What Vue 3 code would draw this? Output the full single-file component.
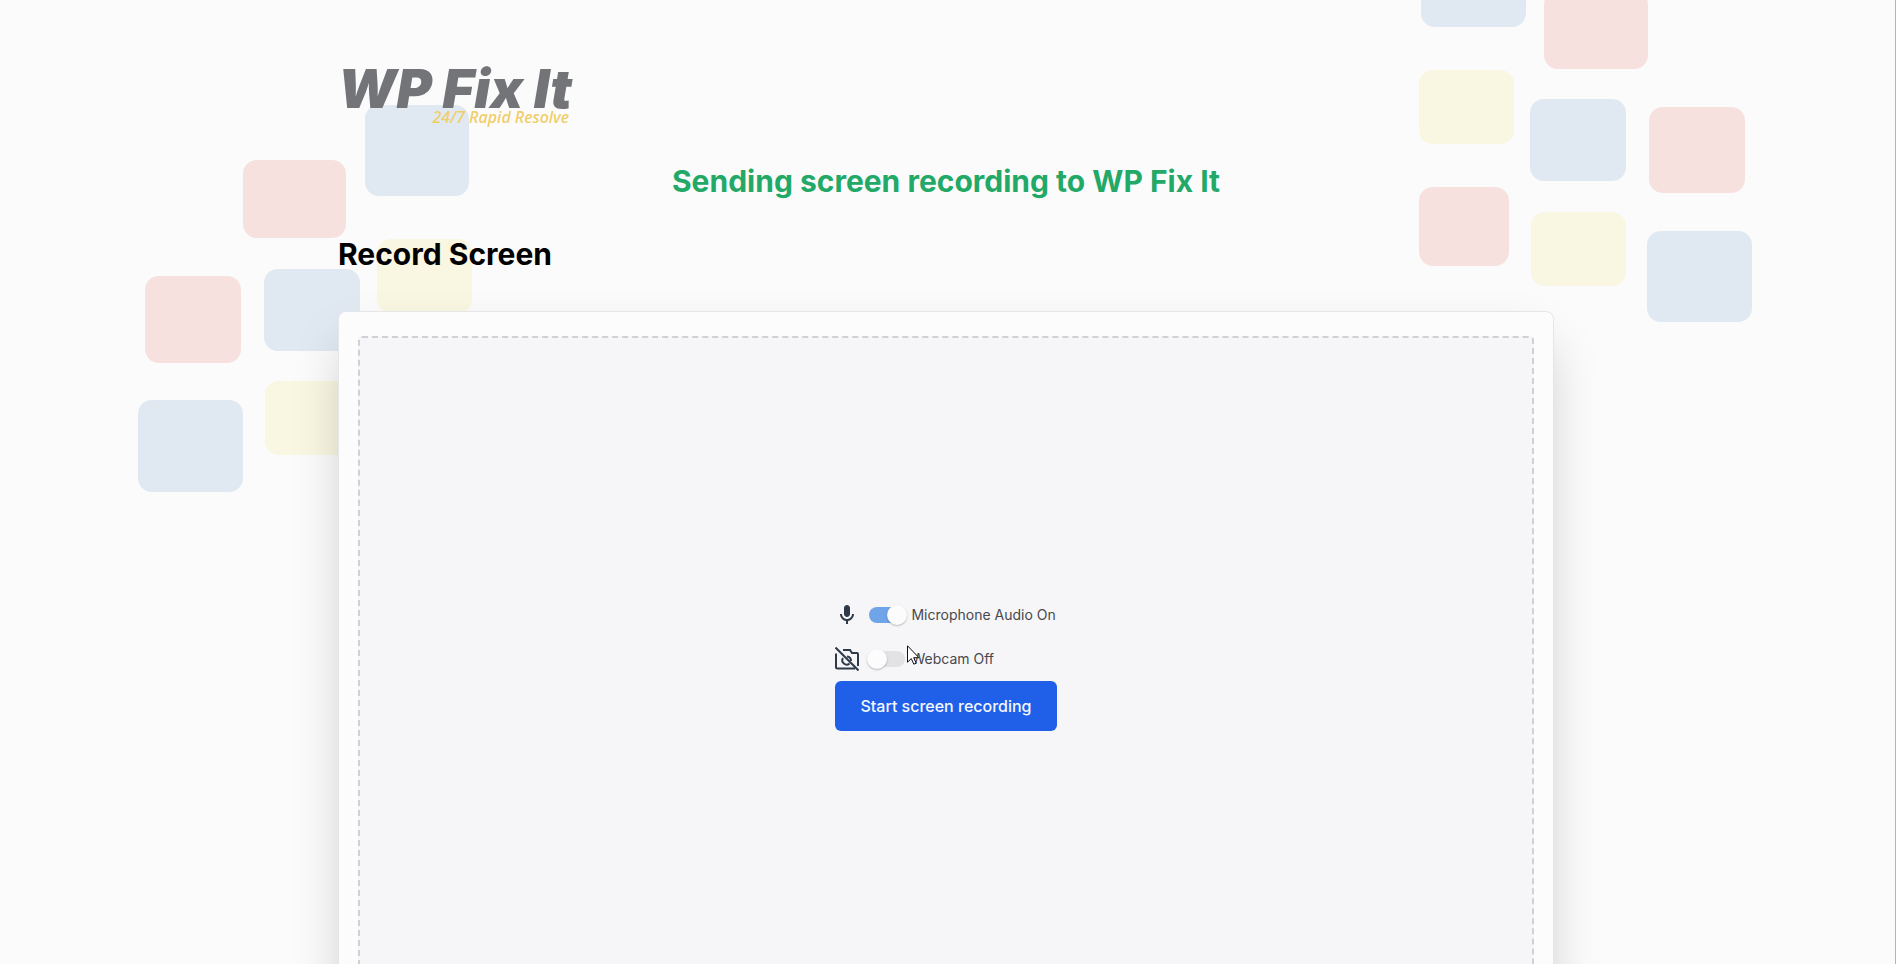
<script setup>
import { ref } from 'vue'

const micOn = ref(true)
const webcamOn = ref(false)

const leftTiles = [
  { x: 243, y: 160, w: 103, h: 78, tone: 'red' },
  { x: 365, y: 105, w: 104, h: 91, tone: 'blue' },
  { x: 145, y: 276, w: 96, h: 87, tone: 'red' },
  { x: 264, y: 269, w: 96, h: 82, tone: 'blue' },
  { x: 377, y: 239, w: 95, h: 74, tone: 'yellow' },
  { x: 265, y: 381, w: 95, h: 74, tone: 'yellow' },
  { x: 138, y: 400, w: 105, h: 92, tone: 'blue' }
]

const rightTiles = [
  { x: 21, y: -64, w: 105, h: 91, tone: 'blue' },
  { x: 144, y: -9, w: 104, h: 78, tone: 'red' },
  { x: 19, y: 70, w: 95, h: 74, tone: 'yellow' },
  { x: 130, y: 99, w: 96, h: 82, tone: 'blue' },
  { x: 249, y: 107, w: 96, h: 86, tone: 'red' },
  { x: 19, y: 187, w: 90, h: 79, tone: 'red' },
  { x: 131, y: 212, w: 95, h: 74, tone: 'yellow' },
  { x: 247, y: 231, w: 105, h: 91, tone: 'blue' }
]
</script>

<template>
  <div class="page">
    <svg class="tiles tiles-left" width="500" height="500" aria-hidden="true">
      <rect v-for="(t, i) in leftTiles" :key="i" :x="t.x" :y="t.y" :width="t.w" :height="t.h" rx="14" :class="t.tone" />
    </svg>
    <svg class="tiles tiles-right" width="495" height="340" aria-hidden="true">
      <rect v-for="(t, i) in rightTiles" :key="i" :x="t.x" :y="t.y" :width="t.w" :height="t.h" rx="14" :class="t.tone" />
    </svg>

    <main class="shell">
      <div class="logo">
        <span class="logo-name">WP Fix It</span>
        <span class="logo-tag">24/7 Rapid Resolve</span>
      </div>
      <h1 class="sending">Sending screen recording to WP Fix It</h1>
      <h2 class="title">Record Screen</h2>

      <section class="card">
        <div class="stage">
          <div class="controls">
            <div class="row">
              <svg class="icon" viewBox="0 0 24 24" aria-hidden="true">
                <path d="M12 14c1.66 0 3-1.34 3-3V5c0-1.66-1.34-3-3-3S9 3.340 9 5v6c0 1.660 1.340 3 3 3zm5-3c0 2.760-2.240 5-5 5s-5-2.240-5-5H5c0 3.530 2.610 6.430 6 6.920V21h2v-3.080c3.390-.49 6-3.390 6-6.920h-2z" />
              </svg>
              <label class="option">
                <input v-model="micOn" class="switch" type="checkbox" />
                <span>Microphone Audio {{ micOn ? 'On' : 'Off' }}</span>
              </label>
            </div>
            <div class="row">
              <svg class="icon line" viewBox="0 0 24 24" aria-hidden="true">
                <path d="M8 3h7l2 3h5q1 0 1 1v12M20 21.500H2.500q-1.500 0-1.500-1.500V6.500" />
                <path d="M8 11a4.300 4.300 0 0 0 6.500 5.500M12 9.500a4.500 4.500 0 0 1 4 4.500" />
                <path d="M.5.5l23 23" />
              </svg>
              <label class="option">
                <input v-model="webcamOn" class="switch" type="checkbox" />
                <span>Webcam {{ webcamOn ? 'On' : 'Off' }}</span>
              </label>
              <svg class="cursor" width="13" height="20" viewBox="0 0 13 20" aria-hidden="true">
                <path d="M.5.8v16.400l3.800-3.600 2.500 5.600 2.400-1-2.500-5.500h5.200z" />
              </svg>
            </div>
            <button class="start" type="button">Start screen recording</button>
          </div>
        </div>
      </section>
    </main>
  </div>
</template>

<style>
body {
  margin: 0;
  background: #fbfbfb;
}
</style>

<style scoped>
.page {
  position: relative;
  box-sizing: border-box;
  height: 100vh;
  padding-right: 3px;
  overflow: hidden;
  border-right: 1px solid #b4b4b4;
  background: #fbfbfb;
  font-family: Inter, "Liberation Sans", sans-serif;
}

.tiles {
  position: absolute;
  top: 0;
}

.tiles-left {
  left: 0;
}

.tiles-right {
  right: 0;
}

.red {
  fill: #f6e1df;
}

.blue {
  fill: #e0e9f2;
}

.yellow {
  fill: #f9f6e1;
}

.shell {
  position: relative;
  max-width: 1216px;
  margin: 0 auto;
  padding: 64px 32px 0;
}

.logo {
  display: flex;
  flex-direction: column;
  width: 231px;
  height: 64px;
  font-style: italic;
  white-space: nowrap;
}

.logo-name {
  color: #737477;
  font-size: 54px;
  font-weight: 900;
  line-height: 50px;
}

.logo-tag {
  align-self: flex-end;
  color: #f0cd67;
  font-family: "Noto Sans", sans-serif;
  font-size: 16px;
  font-weight: 500;
  line-height: 6px;
}

.sending,
.title {
  margin: 0;
  font-size: 30px;
  font-weight: 700;
  line-height: 36px;
}

.sending {
  margin-top: 35px;
  color: #22a968;
  text-align: center;
}

.title {
  margin-top: 37px;
  color: #000;
}

.card {
  margin-top: 39px;
  padding: 24px 19px;
  border: 1px solid #e6e6e8;
  border-radius: 8px;
  background: #fcfcfd;
  box-shadow: 0 25px 50px -12px rgba(0, 0, 0, 0.25);
}

.stage {
  display: flex;
  align-items: center;
  justify-content: center;
  min-height: 648px;
  border: 2px dashed #d1d1d5;
  border-radius: 4px;
  background: #f6f6f9;
}

.controls {
  display: flex;
  flex-direction: column;
}

.row {
  position: relative;
  display: flex;
  align-items: center;
  height: 44px;
}

.icon {
  width: 24px;
  height: 24px;
  fill: #2f3a49;
}

.line {
  fill: none;
  stroke: #2f3a49;
  stroke-width: 2;
}

.option {
  display: flex;
  align-items: center;
  gap: 6px;
  margin-left: 10px;
  color: #48484c;
  font-size: 14px;
  line-height: 20px;
}

.switch {
  position: relative;
  width: 36px;
  height: 16px;
  margin: 0;
  border-radius: 8px;
  appearance: none;
  background: #e2e2e4;
}

.switch::before {
  position: absolute;
  top: -2px;
  left: -2px;
  width: 20px;
  height: 20px;
  border-radius: 50%;
  background: #fcfcfc;
  box-shadow: 0 1px 2px rgba(0, 0, 0, 0.25);
  content: "";
}

.switch:checked {
  background: #70a4e8;
}

.switch:checked::before {
  left: 18px;
}

.cursor {
  position: absolute;
  top: 8px;
  left: 72px;
  fill: #fff;
  stroke: #111;
}

.start {
  height: 50px;
  padding: 0 25px;
  border: 0;
  border-radius: 6px;
  background: #2060e8;
  color: #f4f7ff;
  font-family: inherit;
  font-size: 16px;
  font-weight: 500;
}
</style>
